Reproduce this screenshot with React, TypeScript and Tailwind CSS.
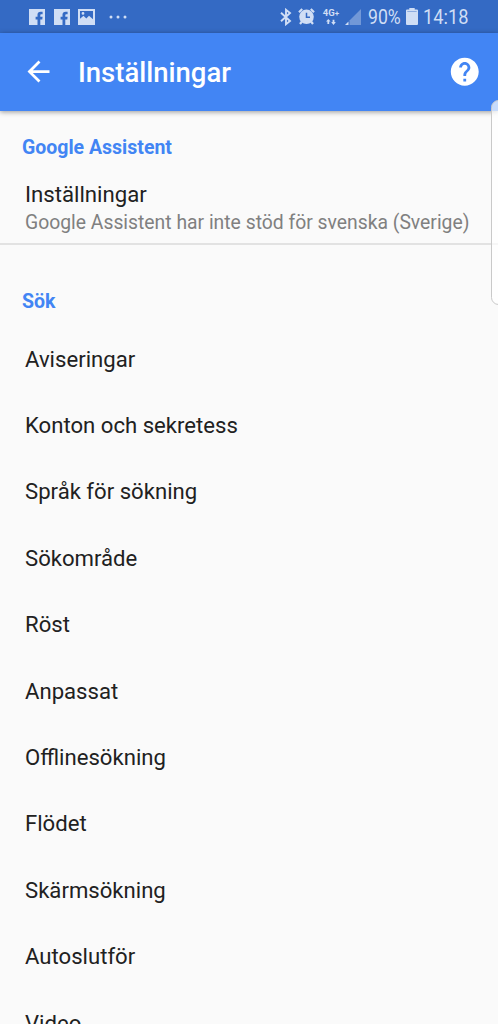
const searchItems = [
  "Aviseringar",
  "Konton och sekretess",
  "Språk för sökning",
  "Sökområde",
  "Röst",
  "Anpassat",
  "Offlinesökning",
  "Flödet",
  "Skärmsökning",
  "Autoslutför",
  "Video",
];

const FacebookIcon = () => (
  <svg className="h-4 w-4" viewBox="0 0 16 16" fill="currentColor">
    <path d="M0 0H16V16H11.3V10.4H13.3L13.6 7.8H11.3V6.4C11.3 5.6 11.6 5.2 12.4 5.2H13.6V2.7H11.6C9.6 2.7 8.5 3.9 8.5 5.8V7.8H6.6V10.4H8.5V16H0Z" />
  </svg>
);

const PictureIcon = () => (
  <svg className="h-4 w-[17px]" viewBox="0 0 17 16" fill="currentColor" fillRule="evenodd">
    <path d="M0 0H17V16H0ZM2 2V9.8L5.5 6.8L8.3 9.4L11 6.8L15 10.2V2ZM5 3A1.4 1.4 0 1 1 5 5.8A1.4 1.4 0 1 1 5 3Z" />
  </svg>
);

const BluetoothIcon = () => (
  <svg className="h-[18px] w-3" viewBox="0 0 12 18" fill="none" stroke="currentColor" strokeWidth="1.9">
    <path d="M1 4.8L10 13L6 16.2V1.8L10 5L1 13.2" />
  </svg>
);

const AlarmIcon = () => (
  <svg className="h-[17px] w-[17px]" viewBox="0 0 17 17">
    <path d="M1 4.2L4.2 1M16 4.2L12.8 1M4 13.5L2 16M13 13.5L15 16" stroke="currentColor" strokeWidth="2.2" />
    <circle cx="8.5" cy="8.8" r="7.3" fill="currentColor" />
    <path d="M8.5 4.8V9.2H12" fill="none" stroke="#346ac4" strokeWidth="1.5" />
  </svg>
);

const NetworkIcon = () => (
  <div className="flex w-[18px] flex-col items-center">
    <span className="text-[9.5px] leading-[9px] font-bold">4G<span className="text-[8px]">+</span></span>
    <svg className="mt-px h-[6px] w-[10px]" viewBox="0 0 10 6" fill="currentColor">
      <path d="M0 2.5L2.3 0L4.6 2.5H3.2V5H1.4V2.5ZM5.2 3L7.5 6L9.8 3H8.4V0.8H6.6V3Z" />
    </svg>
  </div>
);

const SignalIcon = () => (
  <svg className="h-4 w-4" viewBox="0 0 16 16" fill="currentColor">
    <path d="M16 0V16H4.5V11.5Z" opacity="0.4" />
    <path d="M3.5 12.5V16H0Z" />
  </svg>
);

const BatteryIcon = () => (
  <svg className="h-[17px] w-3" viewBox="0 0 12 17" fill="currentColor">
    <path d="M3.3 0H8.7V1.5H11Q12 1.5 12 2.5V16Q12 17 11 17H1Q0 17 0 16V2.5Q0 1.5 1 1.5H3.3Z" />
    <path d="M1.3 3.5H10.7" stroke="#7b9fdb" strokeWidth="0.8" />
  </svg>
);

const StatusBar = () => (
  <div className="flex h-[33px] shrink-0 items-center bg-[#346ac4] pl-[28.5px] text-[#d0def5]">
    <div className="flex items-center">
      <FacebookIcon />
      <div className="ml-[9px]"><FacebookIcon /></div>
      <div className="ml-[8.5px]"><PictureIcon /></div>
      <svg className="ml-[14px] h-1 w-5" viewBox="0 0 20 4" fill="currentColor">
        <circle cx="2" cy="2" r="1.5" />
        <circle cx="9" cy="2" r="1.5" />
        <circle cx="16" cy="2" r="1.5" />
      </svg>
    </div>
    <div className="ml-auto flex w-[218px] items-center">
      <BluetoothIcon />
      <div className="ml-[6px]"><AlarmIcon /></div>
      <div className="ml-[7px]"><NetworkIcon /></div>
      <div className="ml-[5px]"><SignalIcon /></div>
      <span className="ml-[6.5px] w-[34px] origin-left scale-x-[0.86] text-[20.5px] leading-6 whitespace-nowrap">90%</span>
      <div className="ml-[4.5px]"><BatteryIcon /></div>
      <span className="ml-[5px] w-[46px] origin-left scale-x-[0.89] text-[20.5px] leading-6 whitespace-nowrap">14:18</span>
    </div>
  </div>
);

const AppBar = () => (
  <header className="relative flex h-[77.5px] shrink-0 items-center bg-[#4285f4] pr-[16.5px] pl-[22px] text-white shadow-[0_1px_5px_rgba(0,0,0,0.4)]">
    <svg className="h-[33px] w-[33px]" viewBox="0 0 24 24" fill="currentColor">
      <path d="M20 11H7.83l5.59-5.59L12 4l-8 8 8 8 1.41-1.41L7.83 13H20v-2z" />
    </svg>
    <h1 className="ml-[23px] pt-[3px] text-[27.5px] leading-8 font-medium">Inställningar</h1>
    <svg className="ml-auto h-[33.5px] w-[33.5px]" viewBox="0 0 24 24" fill="currentColor">
      <path d="M12 2C6.48 2 2 6.48 2 12s4.48 10 10 10 10-4.48 10-10S17.52 2 12 2zm1 17h-2v-2h2v2zm2.07-7.75l-.9.92C13.45 12.9 13 13.5 13 15h-2v-.5c0-1.1.45-2.1 1.17-2.83l1.24-1.26c.37-.36.59-.86.59-1.41 0-1.1-.9-2-2-2s-2 .9-2 2H8c0-2.21 1.79-4 4-4s4 1.79 4 4c0 .88-.36 1.68-.93 2.25z" />
    </svg>
  </header>
);

const App = () => {
  return (
    <div className="relative flex h-[1024px] w-full flex-col overflow-hidden bg-[#fafafa] font-['Roboto',sans-serif] text-[#212121]">
      <StatusBar />
      <AppBar />
      <main>
        <section className="border-b-2 border-[#e2e2e2] pt-[25px] pb-[7px]">
          <h2 className="pl-[22px] text-[19.5px] leading-6 font-bold text-[#4285f4]">Google Assistent</h2>
          <div className="pt-5 pl-[25px]">
            <p className="text-[22.2px] leading-7">Inställningar</p>
            <p className="pt-[2px] text-[19.33px] leading-[26px] whitespace-nowrap text-[#808080]">
              Google Assistent har inte stöd för svenska (Sverige)
            </p>
          </div>
        </section>
        <section className="pt-[45px]">
          <h2 className="pl-[22px] text-[19.5px] leading-6 font-bold text-[#4285f4]">Sök</h2>
          <ul className="pt-[12.5px]">
            {searchItems.map((item) => (
              <li key={item} className="flex h-[66.4px] items-center pl-[25px] text-[22.13px]">
                {item}
              </li>
            ))}
          </ul>
        </section>
      </main>
      {/* edge panel handle */}
      <div className="absolute top-[100px] -right-[8px] h-[205px] w-[15px] rounded-lg border-[1.5px] border-[#c9c9c9] bg-white/70" />
    </div>
  );
};

export default App;
